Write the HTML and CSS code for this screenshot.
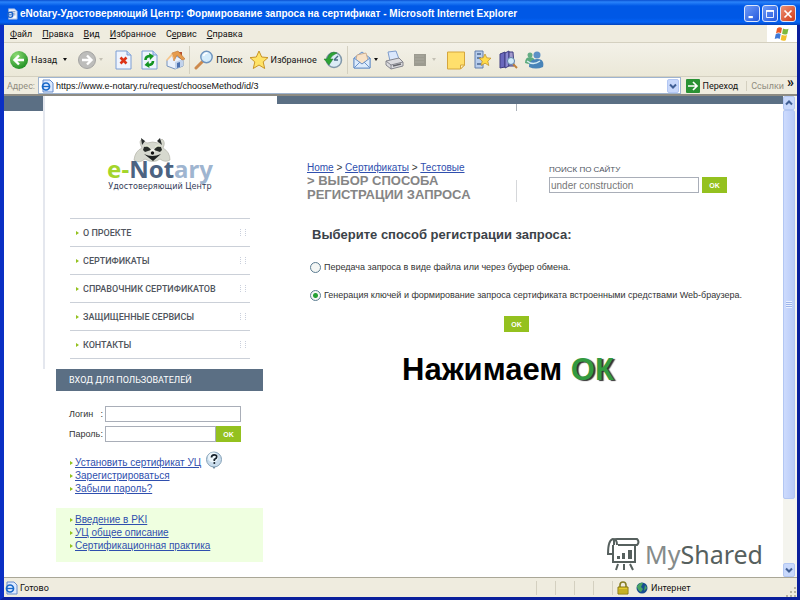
FILE: index.html
```
<!DOCTYPE html>
<html lang="ru">
<head>
  <meta charset="UTF-8" />
  <meta name="viewport" content="width=device-width, initial-scale=1.0"/>
  <title>eNotary-Удостоверяющий Центр: Формирование запроса на сертификат</title>
  <link rel="stylesheet" href="styles.css">
</head>
<body>
  <div class="window">
    <!-- Заголовок окна -->
    <header class="titlebar">
      <svg class="icon-page" viewBox="0 0 14 14"><path d="M3 1h7l3 3v9H3z" fill="#f4f7ff" stroke="#8aa6dc"/><path d="M6 4h5M8 6h3M9 8h2" stroke="#7d94bd"/><circle cx="5" cy="8" r="3" fill="none" stroke="#1c62c8" stroke-width="1.6"/><path d="M2.5 8h5" stroke="#1c62c8" stroke-width="1.2"/></svg>
      <span class="window-title">eNotary-Удостоверяющий Центр: Формирование запроса на сертификат - Microsoft Internet Explorer</span>
      <div class="window-buttons">
        <button type="button" aria-label="Свернуть"><svg viewBox="0 0 16 16"><path d="M4 11.500h5" stroke="#fff" stroke-width="2.500"/></svg></button>
        <button type="button" aria-label="Развернуть"><svg viewBox="0 0 16 16"><path d="M4 4.500h8v7.500H4z" fill="none" stroke="#fff"/><path d="M3.500 4.500h9" stroke="#fff" stroke-width="2"/></svg></button>
        <button type="button" class="close" aria-label="Закрыть"><svg viewBox="0 0 16 16"><path d="M4 4l8 8M12 4l-8 8" stroke="#fff" stroke-width="2"/></svg></button>
      </div>
    </header>

    <nav class="menubar">
      <button type="button"><u>Ф</u>айл</button>
      <button type="button"><u>П</u>равка</button>
      <button type="button"><u>В</u>ид</button>
      <button type="button"><u>И</u>збранное</button>
      <button type="button">С<u>е</u>рвис</button>
      <button type="button"><u>С</u>правка</button>
      <div class="flag">
        <svg viewBox="0 0 16 16"><path d="M3 2.500q2.500-2 5-.5l-1 5.200q-2.500-1.500-5 .300z" fill="#ea5a27"/><path d="M9 2.500q2.500 1.500 5.500.200l-1.200 5.300q-2.800 1.200-5.200-.300z" fill="#7eb93c"/><path d="M1.700 8.300q2.500-1.700 5-.4l-1 5q-2.400-1.300-5 .200z" fill="#3d78d6"/><path d="M7.700 8.700q2.600 1.500 5.300.3l-1.200 5.200q-2.600 1.200-5.100-.300z" fill="#f3c12c"/></svg>
      </div>
    </nav>

    <div class="toolbar">
      <button type="button" class="tool tool-back">
        <svg viewBox="0 0 20 20"><defs><radialGradient id="green" cx="35%" cy="25%" r="80%"><stop offset="0" stop-color="#8fdc74"/><stop offset="1" stop-color="#1e8f22"/></radialGradient></defs><circle cx="10" cy="10" r="9" fill="url(#green)"/><path d="M15 10H6M10 5.500L5.500 10l4.500 4.500" fill="none" stroke="#fff" stroke-width="2.400"/></svg>
        <span>Назад</span><i class="caret"></i>
      </button>
      <button type="button" class="tool tool-forward" aria-label="Вперед">
        <svg viewBox="0 0 20 20"><circle cx="10" cy="10" r="8.500" fill="#bdbdbb" stroke="#a4a4a2"/><path d="M5 10h9M10 5.500l4.500 4.500-4.500 4.500" fill="none" stroke="#fff" stroke-width="2.400"/></svg>
        <i class="caret caret-off"></i>
      </button>
      <button type="button" class="tool tool-stop" aria-label="Остановить">
        <svg viewBox="0 0 20 20"><path d="M3 1h11l4 4v14H3z" fill="#eef4fe" stroke="#7c9ed4"/><path d="M14 1v4h4" fill="#c4d7f4" stroke="#7c9ed4"/><path d="M7.500 7.500l6 6M13.500 7.500l-6 6" stroke="#dd3418" stroke-width="2.600"/></svg>
      </button>
      <button type="button" class="tool tool-refresh" aria-label="Обновить">
        <svg viewBox="0 0 20 20"><path d="M3 1h11l4 4v14H3z" fill="#eef4fe" stroke="#7c9ed4"/><path d="M14 1v4h4" fill="#c4d7f4" stroke="#7c9ed4"/><path d="M6.500 10q0-4 5-4M14 11q0 4-5 4" fill="none" stroke="#149422" stroke-width="2.600"/><path d="M10 3l5 3-4 4zM10.500 18l-5-3 4-4z" fill="#149422"/></svg>
      </button>
      <button type="button" class="tool tool-home" aria-label="Домой">
        <svg viewBox="0 0 20 20"><path d="M14 2h3v6h-3z" fill="#b54e30"/><path d="M2 10l6-6 10 6v6l-8 3-8-3z" fill="#eaf1fb" stroke="#7894bd"/><path d="M10 12l8-3v7l-8 3z" fill="#c2d3ec"/><path d="M7 3l6-2 7 8-3 1-5-5-3 6z" fill="#e69b4c" stroke="#bd7231" stroke-width=".6"/><path d="M7 3L1 10l1 1 5-5 3 5z" fill="#f6c58b"/><path d="M12 13l3-1v5l-3 1z" fill="#4d72b0"/></svg>
      </button>
      <i class="divider"></i>
      <button type="button" class="tool tool-search">
        <svg viewBox="0 0 20 20"><path d="M9 11l-7 7" stroke="#cd8a4d" stroke-width="3" stroke-linecap="round"/><circle cx="12.500" cy="7" r="5.700" fill="#d4ecfb" stroke="#6e94bf" stroke-width="1.400"/><path d="M9.500 6q1-3 4-3" fill="none" stroke="#fff" stroke-width="1.500"/></svg>
        <span>Поиск</span>
      </button>
      <button type="button" class="tool tool-favorites">
        <svg viewBox="0 0 20 20"><path d="M10 1l2.700 6 6.300.6-4.800 4.300 1.500 6.600-5.700-3.500-5.700 3.500 1.500-6.600L1 7.600 7.300 7z" fill="#ffe367" stroke="#c99527"/></svg>
        <span>Избранное</span>
      </button>
      <button type="button" class="tool tool-history" aria-label="Журнал">
        <svg viewBox="0 0 20 20"><circle cx="11" cy="10" r="7.500" fill="#dcecf6" stroke="#8097a9" stroke-width="1.500"/><path d="M11 10l4-4M11 10h4" stroke="#486a85" stroke-width="1.400"/><path d="M14 3Q7 0 4 9H1l5 6 4-6H7q2-4 7-6z" fill="#2ca334" stroke="#1a7826" stroke-width=".5"/></svg>
      </button>
      <i class="divider"></i>
      <button type="button" class="tool tool-mail" aria-label="Почта">
        <svg viewBox="0 0 20 20"><path d="M2 8l8-6 8 6v10H2z" fill="#bfd8f5" stroke="#6c93c9"/><path d="M5 5l9-2 2 7-6 4-6-4z" fill="#f8e2c7" stroke="#c69d77" stroke-width=".7"/><path d="M2 8l8 6 8-6v10H2z" fill="#dcebfc" stroke="#6c93c9"/><path d="M2 18l6-6M18 18l-6-6" stroke="#6c93c9"/></svg>
        <i class="caret"></i>
      </button>
      <button type="button" class="tool tool-print" aria-label="Печать">
        <svg viewBox="0 0 20 20"><path d="M4 2l8-1 3 8-9 2z" fill="#dbe8fc" stroke="#7f9dcc"/><path d="M2 11l13-3 4 4v4l-12 3-5-4z" fill="#dcdcdf" stroke="#85868d"/><path d="M2 11l5 4 12-3M7 15v4" fill="none" stroke="#85868d"/><path d="M9 16l8-2" stroke="#65666c" stroke-width="1.500"/></svg>
      </button>
      <button type="button" class="tool tool-edit" aria-label="Правка">
        <svg viewBox="0 0 20 20"><path d="M4 4h12v12H4z" fill="#9c9b90"/><path d="M5 6h9M5 9h9M5 12h9" stroke="#aaa99f"/></svg>
        <i class="caret caret-off"></i>
      </button>
      <button type="button" class="tool tool-note" aria-label="Заметки">
        <svg viewBox="0 0 20 20"><path d="M1.500 2h17v13l-4 4h-13z" fill="#ffdf6c" stroke="#d5a63d"/><path d="M18.500 15h-4v4z" fill="#fff3bd" stroke="#d5a63d"/></svg>
      </button>
      <button type="button" class="tool tool-links" aria-label="Ссылки">
        <svg viewBox="0 0 20 20"><path d="M3 1h8v17H3z" fill="#b7cdec" stroke="#627fac"/><path d="M5 4h4M5 8h4M5 14h4" stroke="#4b6690" stroke-width="1.500"/><path d="M13 4l1.800 3.800 4.200.4-3.200 2.900 1 4.400-3.800-2.300-3.800 2.300 1-4.400L7 8.200l4.200-.4z" fill="#ffdb4b" stroke="#bd8d24" stroke-width=".7"/></svg>
      </button>
      <button type="button" class="tool tool-research" aria-label="Справочные материалы">
        <svg viewBox="0 0 20 20"><path d="M2 4l5-2v15l-5 1z" fill="#6a68bd" stroke="#3e3d80"/><path d="M7 3l4-2v15l-4 2z" fill="#8b89d2" stroke="#3e3d80"/><path d="M11 2h4l1 14h-5z" fill="#a39bcd" stroke="#3e3d80"/><path d="M15 14l4 4" stroke="#c0823b" stroke-width="2"/><circle cx="13" cy="11" r="3.500" fill="#cfeafa" stroke="#5f82a8"/></svg>
      </button>
      <button type="button" class="tool tool-messenger" aria-label="Messenger">
        <svg viewBox="0 0 20 20"><circle cx="6" cy="5" r="2.500" fill="#65ad85"/><path d="M1 13q0-6 5-6t5 6q-5 2-10 0z" fill="#5cab7d"/><circle cx="13" cy="5" r="3.500" fill="#5d91c6"/><path d="M5 17q0-8 8-8t6 8q-7 3-14 0z" fill="#4884b8"/><path d="M3 11q6 5 13 0" fill="none" stroke="#d5edf5" stroke-width="1.500"/></svg>
      </button>
    </div>

    <form class="addressbar">
      <label for="address">Адрес:</label>
      <div class="address-field">
        <svg viewBox="0 0 14 14"><path d="M3 1h7l3 3v9H3z" fill="#dce9ff" stroke="#668ccc"/><circle cx="6" cy="7.500" r="3.500" fill="none" stroke="#1768c8" stroke-width="1.700"/><path d="M3 7.500h6" stroke="#1768c8" stroke-width="1.300"/></svg>
        <input type="text" id="address" value="https://www.e-notary.ru/request/chooseMethod/id/3">
        <button type="button" class="arrow-button" aria-label="Список адресов"><svg viewBox="0 0 12 12"><path d="M3 4.500l3 3 3-3" fill="none" stroke="#405f95" stroke-width="2"/></svg></button>
      </div>
      <button type="button" class="go">
        <svg viewBox="0 0 14 14"><rect width="14" height="14" rx="1" fill="#2a9234"/><path d="M2 7h9M7 3l4 4-4 4" fill="none" stroke="#fff" stroke-width="1.700"/></svg>
        <span>Переход</span>
      </button>
      <span class="links-label">Ссылки</span>
      <button type="button" class="chevron" aria-label="Еще">»</button>
    </form>

    <!-- Содержимое страницы -->
    <div class="viewport">
      <div class="page">
        <aside class="sidebar">
          <div class="sidebar-top">
            <a class="logo" href="#">
              <svg class="raccoon" viewBox="0 0 38 26"><path d="M1 23Q2 14 9 11Q5 3 9 3l5 3q6-2 11 0l4-4q4 3 1 9q7 4 7 12q-5 3-10-1q-7 5-15 0q-6 5-11 1z" fill="#d7d9cf" stroke="#aaa99e" stroke-width=".6"/><path d="M8 1l4 3-3 4zM27 1l-3 3 5 4z" fill="#272b2a"/><path d="M11 10q4-2 7 3l-6 2-2-2zM28 10q-4-2-7 3l6 2 2-2z" fill="#282c28"/><path d="M12 9q3-1 5 1M27 9q-3-1-5 1" fill="none" stroke="#e6eed0"/><path d="M11 17q8 4 17 0l-8 7z" fill="#1f2221"/><path d="M17 14q3-5 5 0l-2 3z" fill="#f5f5ed"/><circle cx="19.500" cy="16" r="1.700" fill="#111"/></svg>
              <span class="logo-name"><span class="logo-e">e-</span><span class="logo-not">Not</span><span class="logo-ary">ary</span></span>
              <span class="logo-sub">Удостоверяющий Центр</span>
            </a>
            <ul class="menu">
              <li><a href="#">О ПРОЕКТЕ</a></li>
              <li><a href="#">СЕРТИФИКАТЫ</a></li>
              <li><a href="#">СПРАВОЧНИК СЕРТИФИКАТОВ</a></li>
              <li><a href="#">ЗАЩИЩЕННЫЕ СЕРВИСЫ</a></li>
              <li><a href="#">КОНТАКТЫ</a></li>
            </ul>
          </div>
          <h2 class="login-title">ВХОД ДЛЯ ПОЛЬЗОВАТЕЛЕЙ</h2>
          <form class="login">
            <div class="login-row">
              <label for="login"><span>Логин</span><span>:</span></label>
              <input type="text" id="login">
            </div>
            <div class="login-row">
              <label for="password"><span>Пароль</span><span>:</span></label>
              <input type="password" id="password">
              <button type="button" class="ok">OK</button>
            </div>
          </form>
          <ul class="links">
            <li><a href="#">Установить сертификат УЦ</a>
              <svg class="help" viewBox="0 0 18 18"><path d="M11 15l-2 3-2-3z" fill="#587890"/><circle cx="9" cy="8.500" r="7.500" fill="#c9dcec" stroke="#84a1b7"/><circle cx="8" cy="6.500" r="5" fill="#edf6fb"/><path d="M6.500 6.500q0-2.700 2.700-2.700t2.500 2.300q0 1.300-2.400 2.500v1.300" fill="none" stroke="#17222c" stroke-width="1.700"/><circle cx="9.300" cy="12" r="1" fill="#17222c"/></svg>
            </li>
            <li><a href="#">Зарегистрироваться</a></li>
            <li><a href="#">Забыли пароль?</a></li>
          </ul>
          <ul class="links links-box">
            <li><a href="#">Введение в PKI</a></li>
            <li><a href="#">УЦ общее описание</a></li>
            <li><a href="#">Сертификационная практика</a></li>
          </ul>
        </aside>

        <main class="main">
          <div class="top">
            <div class="crumbs">
              <a href="#">Home</a> &gt; <a href="#">Сертификаты</a> &gt; <a href="#">Тестовые</a>
              <h1>&gt; ВЫБОР СПОСОБА РЕГИСТРАЦИИ ЗАПРОСА</h1>
            </div>
            <form class="search">
              <label for="search">ПОИСК ПО САЙТУ</label>
              <div class="search-row">
                <input type="text" id="search" value="under construction">
                <button type="button" class="ok">OK</button>
              </div>
            </form>
          </div>
          <form class="method">
            <h2>Выберите способ регистрации запроса:</h2>
            <label><input type="radio" name="method"> Передача запроса в виде файла или через буфер обмена.</label>
            <label><input type="radio" name="method" checked> Генерация ключей и формирование запроса сертификата встроенными средствами Web-браузера.</label>
            <button type="button" class="ok">OK</button>
          </form>
          <p class="caption">Нажимаем <span>ОК</span></p>
        </main>

        <div class="watermark">
          <svg viewBox="0 0 34 34"><g fill="none" stroke="#56605e" stroke-width="2"><path d="M8 8V3q1-1 3-1h20q3 3 0 6H12"/><path d="M11 8q0-6-4-6-5 1-5 15h5"/><path d="M7 8v17h22V8"/><path d="M12 27l-2 6M18 27v6M24 27l3 6"/></g><path d="M11 19h3v3h-3zM16 16h3v6h-3zM22 13h4v9h-4z" fill="#56605e"/></svg>
          <span class="my">My</span><span>Shared</span>
        </div>
      </div>
      <div class="scrollbar">
        <button type="button" class="arrow-button" aria-label="Вверх"><svg viewBox="0 0 12 12"><path d="M3 7.500l3-3 3 3" fill="none" stroke="#405f95" stroke-width="2"/></svg></button>
        <div class="thumb"><i></i></div>
        <div class="track"></div>
        <button type="button" class="arrow-button" aria-label="Вниз"><svg viewBox="0 0 12 12"><path d="M3 4.500l3 3 3-3" fill="none" stroke="#405f95" stroke-width="2"/></svg></button>
      </div>
    </div>

    <footer class="statusbar">
      <svg viewBox="0 0 14 14"><path d="M3 1h7l3 3v9H3z" fill="#dce9ff" stroke="#668ccc"/><circle cx="6" cy="7.500" r="3.500" fill="none" stroke="#1768c8" stroke-width="1.700"/><path d="M3 7.500h6" stroke="#1768c8" stroke-width="1.300"/></svg>
      <span class="status-text">Готово</span>
      <i class="cell"></i><i class="cell"></i><i class="cell"></i><i class="cell"></i><i class="cell cell-narrow"></i>
      <span class="lock"><svg viewBox="0 0 14 14"><path d="M4 7V4q0-3 3-3t3 3v3" fill="none" stroke="#877d24" stroke-width="1.600"/><path d="M2 6h10v7H2z" fill="#e5cc2b" stroke="#857511"/><path d="M3 9h8M3 11h8" stroke="#a69322"/></svg></span>
      <span class="zone"><svg viewBox="0 0 14 14"><circle cx="7" cy="7" r="5.500" fill="#174c91"/><path d="M2 5q3-4 6-3L6 6l2 2-2 3q-4-2-4-6zM10 4l2 3-3 3z" fill="#48a362"/></svg> Интернет</span>
      <svg class="grip" viewBox="0 0 12 12"><path d="M9 2h2v2H9zM9 6h2v2H9zM5 6h2v2H5zM9 10h2v2H9zM5 10h2v2H5zM1 10h2v2H1z" fill="#b8b4a2"/></svg>
    </footer>
  </div>
</body>
</html>
```
FILE: styles.css
```
:root {
  --chrome: #efecdf;
  --line: #d4d0c0;
  --slate: #5b6f84;
  --green: #94c11f;
  --link: #2f4fae;
  --ui: Roboto, 'DejaVu Sans Condensed', sans-serif;
  --text: 'Liberation Sans', Arial, sans-serif;
}

* {
  box-sizing: border-box;
}

body {
  margin: 0;
  font-family: var(--text);
  font-size: 10px;
  color: #333;
}

ul {
  list-style: none;
  margin: 0;
  padding: 0;
}

button {
  border: none;
  background: none;
  padding: 0;
  margin: 0;
  font: inherit;
  color: inherit;
}

svg {
  display: block;
  flex: none;
}

/* окно */
.window {
  display: flex;
  flex-direction: column;
  height: 100vh;
  background: #fff;
  border: solid #0a2fc4;
  border-width: 0 3px 3px 4px;
  border-bottom-color: #0a1f9c;
  border-right-color: #0a1f9c;
  font-family: var(--ui);
  font-size: 9px;
}

.titlebar {
  display: flex;
  align-items: center;
  gap: 2px;
  height: 25px;
  flex: none;
  margin: 0 -3px 0 -4px;
  padding: 2px 4px 0 6px;
  background: linear-gradient(#0a4fd0 0, #2a83fa 2px, #0058e6 6px, #0058e6 18px, #0563f5 22px, #0443bb 25px);
  color: #fff;
}

.icon-page {
  width: 12px;
  height: 14px;
}

.window-title {
  flex: 1;
  font-family: var(--text);
  font-size: 10px;
  font-weight: bold;
  white-space: nowrap;
}

.window-buttons {
  display: flex;
  gap: 2px;
}

.window-buttons button {
  width: 16px;
  height: 17px;
  border: 1px solid #dce6fb;
  border-radius: 3px;
  background: linear-gradient(135deg, #6d9af8, #2458dd);
}

.window-buttons .close {
  background: linear-gradient(135deg, #ee9074, #cf3b18);
}

.menubar {
  display: flex;
  align-items: center;
  gap: 10px;
  height: 18px;
  flex: none;
  padding-left: 6px;
  background: var(--chrome);
  border-bottom: 1px solid var(--line);
  color: #111;
}

.flag {
  display: flex;
  align-items: center;
  justify-content: center;
  align-self: stretch;
  width: 30px;
  margin-left: auto;
  background: #fff;
}

.flag svg {
  width: 16px;
  height: 16px;
}

.toolbar {
  display: flex;
  align-items: center;
  gap: 6px;
  height: 34px;
  flex: none;
  padding-left: 5px;
  background: linear-gradient(#f3f1e8, #ebe8d8);
  border-bottom: 1px solid var(--line);
  color: #111;
}

.tool {
  display: flex;
  align-items: center;
  gap: 2px;
}

.tool svg {
  width: 20px;
  height: 20px;
}

.tool-back .caret {
  margin-left: 4px;
}

.tool-back,
.tool-forward,
.tool-edit {
  margin-right: 4px;
}

.caret {
  border: 2px solid transparent;
  border-top: 3px solid #111;
  border-bottom: none;
}

.caret-off {
  border-top-color: #c4c1b5;
}

.divider {
  width: 1px;
  height: 28px;
  margin: 0 -2px;
  background: var(--line);
}

.addressbar {
  display: flex;
  align-items: center;
  height: 19px;
  flex: none;
  padding: 0 3px;
  background: var(--chrome);
  border-bottom: 2px solid #8d8b83;
  color: #111;
}

.addressbar label {
  width: 31px;
  color: #8f8c80;
}

.address-field {
  display: flex;
  align-items: center;
  flex: 1;
  height: 17px;
  padding: 1px;
  background: #fff;
  border: 1px solid #9fb4cf;
}

.address-field > svg,
.go svg {
  width: 14px;
  height: 14px;
}

.address-field input {
  flex: 1;
  min-width: 0;
  height: 13px;
  border: none;
  padding: 0 2px;
  background: none;
  font-family: var(--text);
  font-size: 9px;
  color: #111;
}

.arrow-button {
  display: flex;
  align-items: center;
  justify-content: center;
  width: 12px;
  height: 14px;
  flex: none;
  border: 1px solid #b3c7f3;
  border-radius: 2px;
  background: #c8d8fb;
}

.arrow-button svg {
  width: 12px;
  height: 12px;
}

.go {
  display: flex;
  align-items: center;
  gap: 3px;
  margin-left: 5px;
}

.links-label {
  margin-left: 8px;
  padding-left: 4px;
  border-left: 1px solid var(--line);
  color: #8f8c80;
}

.chevron {
  align-self: flex-start;
  margin-left: 3px;
  font-size: 14px;
  font-weight: bold;
  line-height: 10px;
}

/* страница */
.viewport {
  display: flex;
  flex: 1;
  min-height: 0;
}

.page {
  position: relative;
  display: flex;
  flex: 1;
  min-width: 0;
  overflow: hidden;
  background: #fff;
  font-family: var(--text);
  font-size: 10px;
}

.page::before {
  content: "";
  width: 39px;
  height: 15px;
  flex: none;
  background: var(--slate);
}

.sidebar {
  width: 234px;
  flex: none;
}

.sidebar-top {
  height: 273px;
  padding: 41px 27px 0 25px;
  border-left: 2px solid #e4e7ee;
}

.logo {
  display: flex;
  flex-direction: column;
  align-items: center;
  height: 81px;
  text-decoration: none;
}

.raccoon {
  width: 38px;
  height: 26px;
  margin-right: 16px;
}

.logo-name {
  margin-top: -6px;
  font-family: 'Noto Sans', sans-serif;
  font-size: 24px;
  font-weight: bold;
  line-height: 24px;
}

.logo-e {
  color: #a4d52b;
}

.logo-not {
  color: #4c6382;
}

.logo-ary {
  color: #9fb5d0;
}

.logo-sub {
  font-family: 'DejaVu Sans Condensed', sans-serif;
  font-size: 9px;
  line-height: 10px;
  color: #333c58;
}

.menu {
  border-top: 1px solid #cbd0d8;
}

.menu li {
  display: flex;
  align-items: center;
  height: 28px;
  padding: 0 4px 0 6px;
  border-bottom: 1px solid #cbd0d8;
}

.menu li::before,
.links li::before {
  content: "";
  border: 2px solid transparent;
  border-left: 3px solid var(--green);
  border-right: none;
}

.menu li::after {
  content: "";
  width: 4px;
  height: 7px;
  border: dotted #c9cfdc;
  border-width: 0 1px;
}

.menu a {
  flex: 1;
  padding-left: 4px;
  font-family: var(--ui);
  font-size: 9px;
  font-weight: 500;
  color: #50555d;
  text-decoration: none;
}

.login-title {
  height: 22px;
  margin: 0 14px 0 13px;
  padding-left: 13px;
  background: var(--slate);
  color: #fff;
  font-family: var(--ui);
  font-size: 9px;
  font-weight: normal;
  line-height: 22px;
}

.login {
  display: flex;
  flex-direction: column;
  gap: 4px;
  margin: 15px 36px 0 26px;
}

.login-row {
  display: flex;
  font-size: 9px;
}

.login-row label {
  display: flex;
  align-items: center;
  justify-content: space-between;
  width: 36px;
  padding-right: 2px;
}

.login-row input,
.search input {
  flex: 1;
  min-width: 0;
  height: 16px;
  padding: 0 1px;
  border: 1px solid #a9aeb8;
  background: #fff;
  font-family: var(--text);
  font-size: 10px;
  color: #777;
}

.ok {
  width: 25px;
  height: 16px;
  background: var(--green);
  color: #fff;
  font-family: var(--text);
  font-size: 7px;
  font-weight: bold;
}

.links {
  margin: 14px 14px 0 13px;
  padding-left: 14px;
}

.links li {
  display: flex;
  align-items: center;
  gap: 2px;
  height: 13px;
}

.links a,
.crumbs a {
  color: var(--link);
}

.help {
  width: 18px;
  height: 18px;
  margin: 0 0 6px 2px;
}

.links-box {
  padding: 5px 0 10px 14px;
  margin-top: 13px;
  background: #efffe0;
}

.main {
  flex: 1;
  min-width: 0;
  border-top: 8px solid var(--slate);
}

.main::before {
  content: "";
  display: block;
  width: 1px;
  height: 7px;
  margin-left: 239px;
  background: #aab0b8;
}

.top {
  display: flex;
  padding: 50px 56px 0 30px;
}

.crumbs {
  width: 180px;
  line-height: 13px;
}

.crumbs h1 {
  margin: 0;
  font-size: 13px;
  line-height: 14px;
  color: #858585;
}

.search {
  display: grid;
  flex: 1;
  align-content: start;
  gap: 2px;
  margin-left: 29px;
  padding: 4px 0 0 33px;
  background: linear-gradient(#d5d7da, #d5d7da) 0 100% / 1px 22px no-repeat;
}

.search label {
  font-size: 8px;
  line-height: 10px;
  color: #4c5260;
}

.search-row {
  display: flex;
  gap: 3px;
}

.method {
  display: flex;
  flex-direction: column;
  padding: 25px 60px 0 33px;
}

.method h2 {
  margin: 0 0 17px 2px;
  font-size: 13px;
  line-height: 16px;
  color: #3b4248;
}

.method label {
  display: flex;
  align-items: center;
  gap: 3px;
  height: 14px;
  margin-bottom: 14px;
  font-size: 9px;
  white-space: nowrap;
}

.method input {
  appearance: none;
  width: 11px;
  height: 11px;
  margin: 0;
  flex: none;
  border: 1px solid #5b7c91;
  border-radius: 50%;
  background: #f4f6f4;
}

.method input:checked {
  background: radial-gradient(#25a035 0, #25a035 2px, #f4f6f4 3px);
}

.method .ok {
  align-self: center;
}

.caption {
  margin: 19px 0 0 125px;
  font-size: 31px;
  font-weight: bold;
  line-height: 38px;
  color: #000;
}

.caption span {
  color: #339a40;
  text-shadow: 2px 1px 1px #333;
}

.watermark {
  position: absolute;
  right: 20px;
  bottom: 6px;
  display: flex;
  align-items: center;
  font-family: 'Noto Sans', sans-serif;
  font-size: 25px;
  color: #56605e;
}

.watermark svg {
  width: 34px;
  height: 34px;
  margin-right: 5px;
}

.watermark .my {
  color: #858b8a;
}

.scrollbar {
  display: flex;
  flex-direction: column;
  width: 14px;
  flex: none;
  background: #f4f4ee;
}

.thumb {
  display: flex;
  align-items: center;
  justify-content: center;
  flex: 6;
  margin-right: 2px;
  border: 1px solid #b3c7f3;
  border-radius: 2px;
  background: linear-gradient(90deg, #cddbfd, #b9cbf8);
}

.thumb i {
  width: 6px;
  height: 7px;
  background: repeating-linear-gradient(#e9f0ff 0 1px, #9db4ea 1px 2px);
}

.track {
  flex: 1;
}

/* строка состояния */
.statusbar {
  display: flex;
  align-items: center;
  height: 20px;
  flex: none;
  background: var(--chrome);
  border-top: 1px solid #aaa797;
  color: #111;
}

.statusbar svg {
  width: 14px;
  height: 14px;
}

.status-text {
  flex: 1;
  padding-left: 2px;
}

.cell {
  width: 19px;
  height: 14px;
  border-left: 1px solid var(--line);
}

.cell-narrow {
  width: 4px;
}

.lock {
  width: 19px;
}

.zone {
  display: flex;
  align-items: center;
  gap: 2px;
  width: 150px;
}

.statusbar .grip {
  width: 12px;
  height: 12px;
  align-self: flex-end;
}
```
